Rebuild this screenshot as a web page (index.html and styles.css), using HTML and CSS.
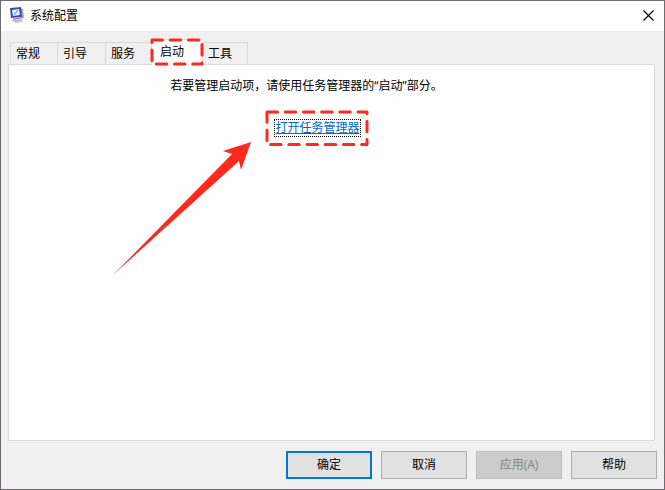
FILE: index.html
```html
<!DOCTYPE html>
<html lang="zh-CN">
<head>
<meta charset="utf-8">
<title>系统配置</title>
<link rel="stylesheet" href="styles.css">
</head>
<body>
<main class="window">
  <header class="titlebar">
    <svg class="app-icon" viewBox="0 0 16 16" aria-hidden="true">
      <path d="M4 12l5-1 5 2-1 2-6 1-4-2z" fill="#c4c4cc"/>
      <path d="M11 1l3 1 1 9-3 1z" fill="#a9a9b8"/>
      <path d="M1 1l11-1 1 10-11 1z" fill="#3f48b8"/>
      <path d="M3 3l7-1 1 6-7 1z" fill="#dcf3ff"/>
      <path d="M5 8l4-5" stroke="#2d8fd0" fill="none"/>
      <path d="M4 12l8-1" stroke="#8286a8" fill="none"/>
    </svg>
    <h1 class="title">系统配置</h1>
    <button class="close" type="button" aria-label="关闭">
      <svg class="close-icon" viewBox="0 0 11 11" aria-hidden="true"><path d="M.5.5l10 10M10.500.5l-10 10" fill="none" stroke="#000" stroke-width="1.2"/></svg>
    </button>
  </header>
  <div class="content">
    <div class="tabs" role="tablist">
      <button class="tab" type="button" role="tab">常规</button>
      <button class="tab" type="button" role="tab">引导</button>
      <button class="tab" type="button" role="tab">服务</button>
      <button class="tab active" type="button" role="tab" aria-selected="true">启动
        <svg class="mark tab-mark" viewBox="0 0 56 30" aria-hidden="true"><path d="M3 3H53V27H3Z"/></svg>
      </button>
      <button class="tab" type="button" role="tab">工具</button>
    </div>
    <section class="panel" role="tabpanel">
      <p class="message">若要管理启动项，请使用任务管理器的“启动”部分。</p>
      <div class="link-area">
        <a class="link" href="#">打开任务管理器</a>
        <svg class="mark link-mark" viewBox="0 0 106 38" aria-hidden="true"><path d="M3 3H103V35.500H3Z"/></svg>
        <svg class="arrow" viewBox="0 0 140 134" aria-hidden="true"><path d="M138 0L110 9 119 12 0 133 126 19 128 28Z" fill="#ff2a1d"/></svg>
      </div>
    </section>
    <footer class="actions">
      <button class="button primary" type="button">确定</button>
      <button class="button" type="button">取消</button>
      <button class="button" type="button" disabled>应用(A)</button>
      <button class="button" type="button">帮助</button>
    </footer>
  </div>
</main>
</body>
</html>
```
FILE: styles.css
```css
* { box-sizing: border-box; }
body {
  margin: 0;
  font: 12px/16px "Open Sans", "Noto Sans CJK SC", sans-serif;
  color: #000;
}
button { font: inherit; color: inherit; }
.window {
  display: flex;
  flex-direction: column;
  min-height: 100vh;
  border: 1px solid #6e6c6e;
  background: #f0f0f0;
}
.titlebar {
  display: flex;
  align-items: center;
  height: 30px;
  padding: 0 10px 2px 8px;
  background: #fff;
}
.app-icon { width: 16px; height: 16px; }
.title { flex: 1; margin: 0 0 0 5px; padding-top: 2px; font-size: 12px; font-weight: 400; }
.close { display: flex; padding: 0; border: 0; background: none; }
.close-icon { width: 11px; height: 11px; }
.content {
  flex: 1;
  display: flex;
  flex-direction: column;
  padding: 8px 7px 10px;
}
.tabs {
  display: flex;
  align-items: flex-end;
  padding-left: 2px;
}
.tab {
  height: 22px;
  width: 48px;
  padding: 0 0 0 5px;
  border: 1px solid #dadada;
  border-right: 0;
  border-bottom: 0;
  background: #f0f0f0;
  text-align: left;
}
.tab:first-child { width: 47px; }
.tab:last-child { width: 46px; border-right: 1px solid #dadada; }
.tab.active {
  position: relative;
  z-index: 1;
  width: 51px;
  height: 26px;
  margin: 0 0 -1px -2px;
  padding: 0 0 2px 8px;
  background: #fff;
}
.panel {
  flex: 1;
  display: flex;
  flex-direction: column;
  align-items: center;
  margin-right: 2px;
  padding-top: 13px;
  border: 1px solid #dadada;
  background: #fff;
}
.message { margin: 0 50px 0 0; }
.link-area { position: relative; margin: 26px 28px 0 0; }
.link {
  display: block;
  outline: 1px dotted #000;
  color: #0066cc;
}
.mark {
  position: absolute;
  overflow: visible;
  pointer-events: none;
}
.mark path {
  fill: none;
  stroke: #ff2a1d;
  stroke-width: 3;
  stroke-linecap: round;
  stroke-linejoin: round;
  stroke-dasharray: 10.5 7.7;
}
.tab-mark { left: -3px; top: -3px; width: 56px; height: 30px; }
.link-mark { left: -11px; top: -11px; width: 106px; height: 38px; }
.arrow { position: absolute; right: 107px; top: 22px; width: 140px; height: 134px; }
.actions {
  display: flex;
  justify-content: flex-end;
  gap: 9px;
  padding-top: 10px;
}
.button {
  width: 86px;
  height: 28px;
  padding: 0;
  border: 1px solid #adadad;
  background: #e1e1e1;
}
.primary { border: 2px solid #0078d7; }
.button:disabled {
  border-color: #bfbfbf;
  background: #ccc;
  color: #838383;
}
```
